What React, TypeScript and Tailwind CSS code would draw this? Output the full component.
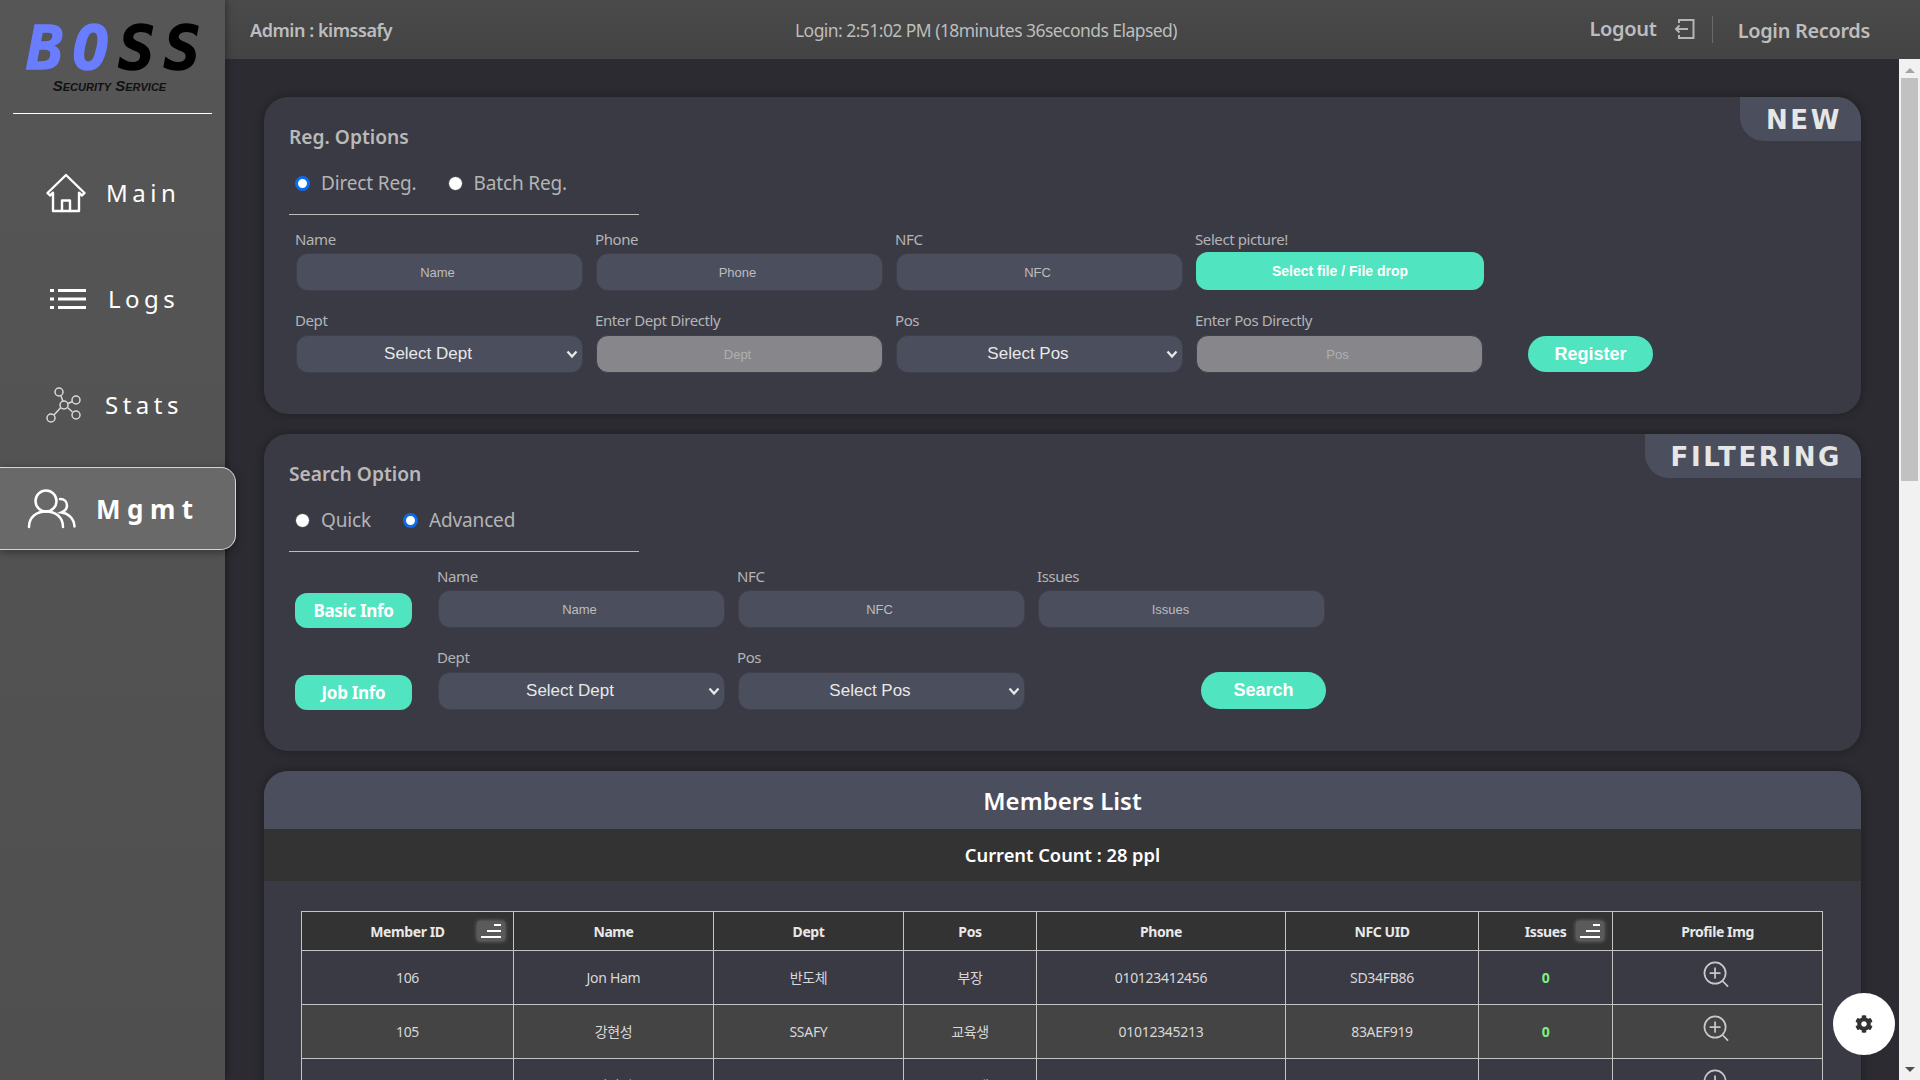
import { FaCog } from "react-icons/fa"

const sans = "font-['Noto_Sans','Noto_Sans_CJK_KR',sans-serif]"
const arial = "font-['Liberation_Sans',Arial,sans-serif] tracking-normal"

function HomeIcon() {
  return (
    <svg width="40" height="40" viewBox="0 0 40 40" fill="none" stroke="#fff" strokeWidth="2.400" strokeLinejoin="round" strokeLinecap="round">
      <path d="M1.500 20 20 2l18.500 18-2.500 2.500-3-2.800V38H7V19.700L4 22.500z" />
      <path d="M16 38V27.500h8V38" />
    </svg>
  )
}

function ListIcon() {
  return (
    <svg width="36" height="22" viewBox="0 0 36 22" fill="#fff">
      <rect x="0" y="1" width="4" height="3" />
      <rect x="8" y="1" width="28" height="3" />
      <rect x="0" y="9.500" width="4" height="3" />
      <rect x="8" y="9.500" width="28" height="3" />
      <rect x="0" y="18" width="4" height="3" />
      <rect x="8" y="18" width="28" height="3" />
    </svg>
  )
}

function StatsIcon() {
  return (
    <svg width="36" height="36" viewBox="0 0 36 36" fill="none" stroke="#d8d8d8" strokeWidth="1.500">
      <circle cx="13" cy="5" r="4" />
      <circle cx="30" cy="13" r="4" />
      <circle cx="30" cy="28" r="4" />
      <circle cx="5" cy="31" r="4" />
      <circle cx="18" cy="18" r="4" />
      <path d="m15 9 2 5.500M22 16.500l4.500-2M21.500 20.500l5 4.500M14.800 20.500 8 28" />
    </svg>
  )
}

function UsersIcon() {
  return (
    <svg width="50" height="42" viewBox="0 0 50 42" fill="none" stroke="#fff" strokeWidth="2.500" strokeLinecap="round">
      <circle cx="19" cy="13" r="10.500" />
      <path d="M2 39c0-10 7.500-15.500 17-15.500S36 29 36 39" />
      <path d="M33 11c4.500 0 7 3 7 6.500 0 3.500-2 5.500-5.500 7 7 1 12.500 6 13 14" />
    </svg>
  )
}

function LogoutIcon() {
  return (
    <svg width="21" height="22" viewBox="0 0 21 22" fill="none" stroke="#b5b5b5" strokeWidth="2">
      <path d="M5 5V2h14.500v18H5v-3" />
      <path d="M14 11H2M5.500 7.500 2 11l3.500 3.500" />
    </svg>
  )
}

function ZoomPlusIcon() {
  return (
    <svg width="27" height="27" viewBox="0 0 28 28" fill="none" stroke="#c8c8c8" strokeWidth="1.800" strokeLinecap="round">
      <circle cx="12.500" cy="12.500" r="11" />
      <path d="M12.500 7.500v10M7.500 12.500h10M20.500 21l5 5" />
    </svg>
  )
}

function SortButton() {
  return (
    <span className="flex h-[20px] w-[28px] items-center justify-center rounded-[3px] bg-[#5a5a5a] shadow-[0_0_4px_#777]">
      <svg width="22" height="16" viewBox="0 0 22 16" fill="#fff">
        <rect x="14" y="1" width="7" height="2" />
        <rect x="7" y="7" width="14" height="2" />
        <rect x="1" y="13" width="20" height="2" />
      </svg>
    </span>
  )
}

function Radio({ checked, label }: { checked?: boolean; label: string }) {
  return (
    <label className="flex items-center gap-[11px]">
      <span className={checked ? "size-[15px] rounded-full border-[3px] border-[#0b6cf0] bg-white" : "size-[15px] rounded-full border border-[#3a3a45] bg-white"} />
      <span className="text-[19px] tracking-[-0.15px] text-[#b4b4b4]">{label}</span>
    </label>
  )
}

function Field({ label, tall, children }: { label: string; tall?: boolean; children: React.ReactNode }) {
  return (
    <div className="w-[287px]">
      <div className={(tall ? "h-[25px]" : "h-[24px]") + " -ml-px text-[15px] leading-[20px] tracking-[-0.4px] text-[#b4b4b4]"}>{label}</div>
      {children}
    </div>
  )
}

function TextInput({ placeholder, disabled, pad }: { placeholder: string; disabled?: boolean; pad?: string }) {
  return (
    <input
      placeholder={placeholder}
      disabled={disabled}
      className={
        arial +
        " block h-[38px] w-[287px] rounded-[12px] border border-[#3f404b] text-center text-[13px] outline-none " +
        (pad ?? "pr-[4px] ") +
        (disabled ? " bg-[#87868b] placeholder:text-[#b0b0b0]" : " bg-[#4b4e5d] placeholder:text-[#bdbdbd]")
      }
    />
  )
}

function SelectInput({ label }: { label: string }) {
  return (
    <div className="relative h-[38px] w-[287px]">
      <select className={arial + " block h-[38px] w-[287px] appearance-none rounded-[12px] border border-[#3f404b] bg-[#4b4e5d] pr-[23px] text-center text-[17px] text-[#e8e8e8] outline-none"}>
        <option>{label}</option>
      </select>
      <svg className="absolute right-[5px] top-[15px]" width="12" height="9" viewBox="0 0 12 9" fill="none" stroke="#e8e8e8" strokeWidth="2.200">
        <path d="m1.500 1.500 4.500 5 4.500-5" />
      </svg>
    </div>
  )
}

function TealButton({ children, className }: { children: React.ReactNode; className?: string }) {
  return <button className={"bg-[#51e4c0] text-white " + className}>{children}</button>
}

function Card({ tag, title, tagClass, children }: { tag: string; title: string; tagClass: string; children: React.ReactNode }) {
  return (
    <section className="relative rounded-[24px] bg-[#3a3a45] pb-[41px] pl-[25px] pt-[26px] shadow-[0_0_8px_rgba(0,0,0,0.35)]">
      <div className={"absolute right-0 top-0 flex h-[44px] items-center justify-end rounded-bl-[24px] rounded-tr-[24px] bg-[#4b4e5d] pr-[19px] pt-[3px] font-['DejaVu_Sans',sans-serif] text-[26px] font-bold tracking-[2.600px] text-[#e6e6e6] " + tagClass}>{tag}</div>
      <h2 className="h-[28px] text-[19.200px] font-semibold leading-[28px] tracking-normal text-[#b9b9b9]">{title}</h2>
      {children}
    </section>
  )
}

const navItems = [
  { label: "Main", icon: <HomeIcon />, iconBox: "w-[40px] ml-[46px] mr-[20px]" },
  { label: "Logs", icon: <ListIcon />, iconBox: "w-[36px] ml-[50px] mr-[22px]" },
  { label: "Stats", icon: <StatsIcon />, iconBox: "w-[36px] ml-[46px] mr-[23px]" },
]

const columns = [212, 200, 190, 133, 249, 193, 134, 210]

const rows = [
  ["106", "Jon Ham", "반도체", "부장", "010123412456", "SD34FB86", "0"],
  ["105", "강현성", "SSAFY", "교육생", "01012345213", "83AEF919", "0"],
  ["104", "김싸피", "SSAFY", "교육생", "01012345678", "A1B2C3D4", "0"],
]

export default function App() {
  return (
    <div className={sans + " relative flex h-screen w-full overflow-hidden bg-[#2b2b31] tracking-[-0.3px]"}>
      <aside className="relative z-10 w-[225px] shrink-0 bg-gradient-to-b from-[#565656] to-[#4f4f4f] shadow-[2px_0_6px_rgba(0,0,0,0.3)]">
        <div className="mx-[13px] h-[114px] border-b border-white pt-[23px] text-center">
          <div className="h-[50px] whitespace-nowrap pl-[12px] font-['DejaVu_Sans_Mono',monospace] text-[60px] font-bold italic leading-[50px] tracking-[9.500px] [-webkit-text-stroke:1.5px_currentColor]">
            <span className="text-[#6a7dff]">BO</span>
            <span className="text-black">SS</span>
          </div>
          <div className="mt-[6px] whitespace-nowrap pr-[6px] font-['Liberation_Sans',sans-serif] text-[15px] font-bold italic leading-[14px] tracking-normal text-[#111]" style={{ fontVariant: "small-caps" }}>
            Security Service
          </div>
        </div>
        <nav className="mt-[26px] text-white">
          {navItems.map((n) => (
            <div key={n.label} className="flex h-[106px] items-center">
              <span className={"flex justify-center " + n.iconBox}>{n.icon}</span>
              <span className="text-[24px] leading-none tracking-[4.500px]">{n.label}</span>
            </div>
          ))}
          <div className="mt-[9px] flex h-[83px] w-[236px] items-center rounded-r-[15px] border border-l-0 border-[#d5d5d5] bg-[#696969] shadow-[0_2px_8px_rgba(0,0,0,0.4)]">
            <span className="ml-[27px] mr-[19px] flex"><UsersIcon /></span>
            <span className="text-[26px] font-bold leading-none tracking-[6.500px]">Mgmt</span>
          </div>
        </nav>
      </aside>

      <div className="flex min-w-0 flex-1 flex-col">
        <header className="relative z-[5] flex h-[59px] shrink-0 items-center bg-gradient-to-b from-[#4a4a4a] to-[#434343] text-[#bdbdbd]">
          <span className="ml-[25px] mt-[2px] w-[545px] text-[18px] font-semibold tracking-[-0.45px]">Admin : kimssafy</span>
          <span className="mt-[2px] text-[17.500px] tracking-[-0.55px]">Login: 2:51:02 PM (18minutes 36seconds Elapsed)</span>
          <div className="ml-auto flex items-center">
            <span className="mb-[2px] text-[20px] font-semibold">Logout</span>
            <span className="mb-[2px] ml-[17px] flex"><LogoutIcon /></span>
            <span className="ml-[17px] h-[27px] w-px bg-[#6a6a6a]" />
            <span className="ml-[25px] mr-[50px] mt-[2px] text-[19.900px] font-semibold tracking-[-0.3px]">Login Records</span>
          </div>
        </header>

        <div className="flex min-h-0 flex-1">
          <main className="flex min-w-0 flex-1 flex-col gap-[20px] overflow-hidden pl-[39px] pr-[38px] pt-[38px]">
            <Card tag="NEW" title="Reg. Options" tagClass="w-[121px]">
              <div className="mt-[17px] flex h-[30px] items-center gap-[31px] pl-[6px]">
                <Radio checked label="Direct Reg." />
                <Radio label="Batch Reg." />
              </div>
              <div className="mt-[16px] h-px w-[350px] bg-[#bdbdbd]" />
              <div className="ml-[7px] mt-[14px] flex gap-[13px]">
                <Field label="Name"><TextInput placeholder="Name" /></Field>
                <Field label="Phone"><TextInput placeholder="Phone" /></Field>
                <Field label="NFC"><TextInput placeholder="NFC" /></Field>
                <Field label="Select picture!">
                  <TealButton className={arial + " -mt-px block h-[38px] w-[288px] rounded-[12px] text-[14px] font-bold"}>Select file / File drop</TealButton>
                </Field>
              </div>
              <div className="ml-[7px] mt-[19px] flex items-end gap-[13px]">
                <Field tall label="Dept"><SelectInput label="Select Dept" /></Field>
                <Field tall label="Enter Dept Directly"><TextInput placeholder="Dept" disabled /></Field>
                <Field tall label="Pos"><SelectInput label="Select Pos" /></Field>
                <Field tall label="Enter Pos Directly"><TextInput placeholder="Pos" disabled /></Field>
                <TealButton className={arial + " mb-px ml-[32px] h-[36px] w-[125px] rounded-full text-[18px] font-bold"}>Register</TealButton>
              </div>
            </Card>

            <Card tag="FILTERING" title="Search Option" tagClass="w-[216px]">
              <div className="mt-[17px] flex h-[30px] items-center gap-[32px] pl-[6px]">
                <Radio label="Quick" />
                <Radio checked label="Advanced" />
              </div>
              <div className="mt-[16px] h-px w-[350px] bg-[#bdbdbd]" />
              <div className="ml-[6px] mt-[14px] flex items-end">
                <TealButton className="mr-[26px] h-[35px] w-[117px] rounded-[12px] text-[17px] font-bold">Basic Info</TealButton>
                <div className="flex gap-[13px]">
                  <Field label="Name"><TextInput placeholder="Name" /></Field>
                  <Field label="NFC"><TextInput placeholder="NFC" /></Field>
                  <Field label="Issues"><TextInput placeholder="Issues" pad="pr-[22px]" /></Field>
                </div>
              </div>
              <div className="ml-[6px] mt-[19px] flex items-end">
                <TealButton className="mr-[26px] h-[35px] w-[117px] rounded-[12px] text-[17px] font-bold">Job Info</TealButton>
                <div className="flex gap-[13px]">
                  <Field tall label="Dept"><SelectInput label="Select Dept" /></Field>
                  <Field tall label="Pos"><SelectInput label="Select Pos" /></Field>
                </div>
                <TealButton className={arial + " mb-px ml-[176px] h-[37px] w-[125px] rounded-full text-[18px] font-bold"}>Search</TealButton>
              </div>
            </Card>

            <section className="rounded-t-[24px] bg-[#3a3a45] shadow-[0_0_8px_rgba(0,0,0,0.35)]">
              <h2 className="flex h-[58px] items-center justify-center rounded-t-[24px] bg-[#4b4e5d] pt-[2px] text-[24px] font-semibold tracking-normal text-white">Members List</h2>
              <div className="flex h-[52px] items-center justify-center bg-[#333333] text-[18.300px] font-semibold tracking-normal text-white">Current Count : 28 ppl</div>
              <div className="pl-[37px] pr-[38px] pt-[30px]">
                <table className="w-[1522px] table-fixed border-collapse text-center text-[14px] text-[#d8d8d8]">
                  <colgroup>
                    {columns.map((w, i) => <col key={i} style={{ width: w }} />)}
                  </colgroup>
                  <thead>
                    <tr className="h-[39px] bg-[#333333] text-[14px] font-bold tracking-[-0.4px] text-[#e8e8e8]">
                      <th className="relative border border-[#c4c4c4]">
                        Member ID
                        <span className="absolute right-[8px] top-[9px]"><SortButton /></span>
                      </th>
                      <th className="border border-[#c4c4c4]">Name</th>
                      <th className="border border-[#c4c4c4]">Dept</th>
                      <th className="border border-[#c4c4c4]">Pos</th>
                      <th className="border border-[#c4c4c4]">Phone</th>
                      <th className="border border-[#c4c4c4]">NFC UID</th>
                      <th className="relative border border-[#c4c4c4]">
                        Issues
                        <span className="absolute right-[8px] top-[9px]"><SortButton /></span>
                      </th>
                      <th className="border border-[#c4c4c4]">Profile Img</th>
                    </tr>
                  </thead>
                  <tbody>
                    {rows.map((r, i) => (
                      <tr key={r[0]} className={i % 2 === 1 ? "h-[54px] bg-[#444444]" : "h-[54px]"}>
                        {r.slice(0, 6).map((c, j) => (
                          <td key={j} className="border border-[#c4c4c4]">{c}</td>
                        ))}
                        <td className="border border-[#c4c4c4] font-bold text-[#7ff07f]">{r[6]}</td>
                        <td className="border border-[#c4c4c4]">
                          <span className="mb-[6px] flex justify-center pr-[2px]"><ZoomPlusIcon /></span>
                        </td>
                      </tr>
                    ))}
                  </tbody>
                </table>
              </div>
            </section>
          </main>

          <div className="flex w-[21px] shrink-0 flex-col items-center bg-[#f1f1f1]">
            <span className="mt-[9px] h-0 w-0 border-x-[5px] border-b-[5px] border-x-transparent border-b-[#a3a3a3]" />
            <span className="mt-[5px] h-[403px] w-[17px] bg-[#c1c1c1]" />
            <span className="mb-[8px] mt-auto h-0 w-0 border-x-[5px] border-t-[5px] border-x-transparent border-t-[#505050]" />
          </div>
        </div>
      </div>

      <button className="absolute bottom-[25px] right-[25px] z-20 flex size-[62px] items-center justify-center rounded-full bg-white text-[18px] text-[#333]">
        <FaCog />
      </button>
    </div>
  )
}
